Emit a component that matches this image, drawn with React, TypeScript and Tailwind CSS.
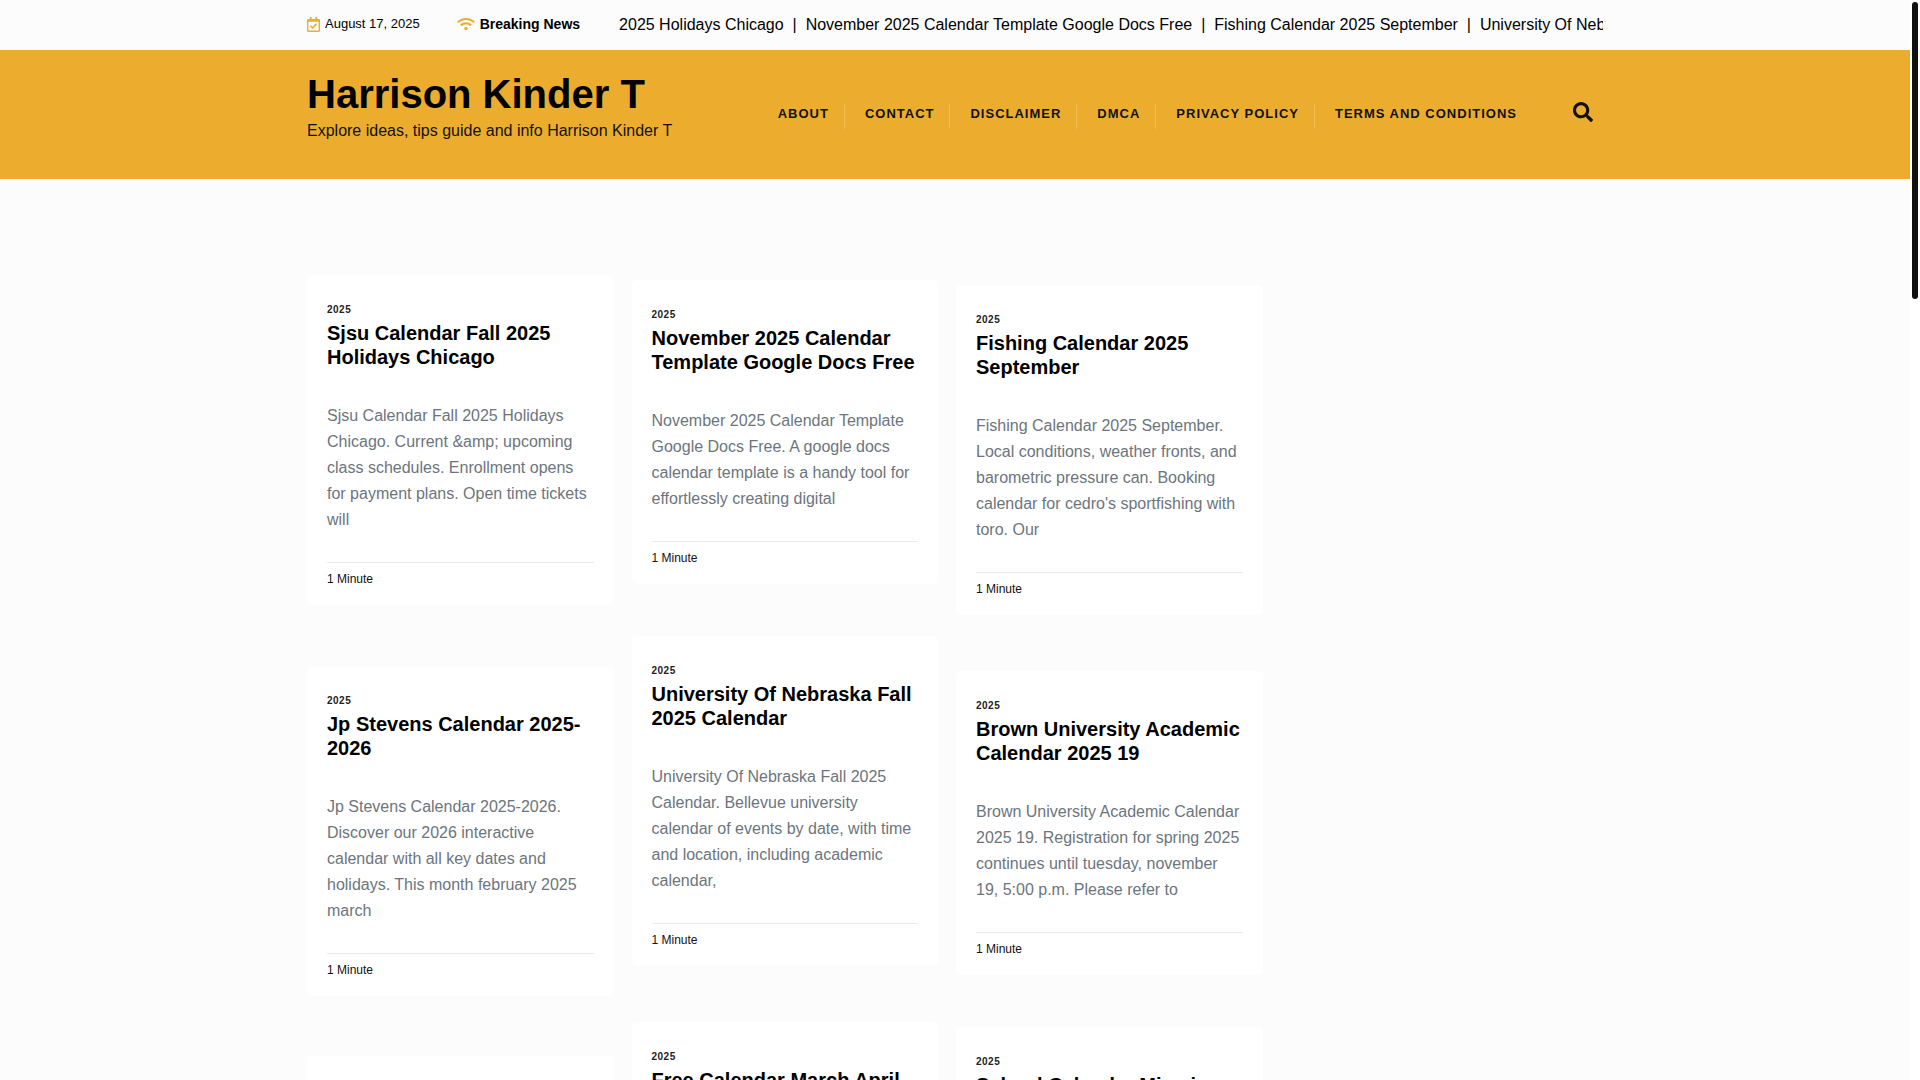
import React from "react";
import { FaRegCalendarCheck, FaSearch, FaWifi } from "react-icons/fa";

type Post = { title: string; excerpt?: string; spacing: string };

const ticker = [
  "2025 Holidays Chicago",
  "November 2025 Calendar Template Google Docs Free",
  "Fishing Calendar 2025 September",
  "University Of Nebraska Fall 2025 Calendar",
];

const menu = ["About", "Contact", "Disclaimer", "DMCA", "Privacy Policy", "Terms and Conditions"];

const columns: { offset: string; posts: Post[] }[] = [
  {
    offset: "pt-24",
    posts: [
      {
        title: "Sjsu Calendar Fall 2025 Holidays Chicago",
        excerpt:
          "Sjsu Calendar Fall 2025 Holidays Chicago. Current &amp; upcoming class schedules. Enrollment opens for payment plans. Open time tickets will",
        spacing: "mt-0",
      },
      {
        title: "Jp Stevens Calendar 2025-2026",
        excerpt:
          "Jp Stevens Calendar 2025-2026. Discover our 2026 interactive calendar with all key dates and holidays. This month february 2025 march",
        spacing: "mt-[61px]",
      },
      { title: "", spacing: "mt-[60px]" },
    ],
  },
  {
    offset: "pt-[101px]",
    posts: [
      {
        title: "November 2025 Calendar Template Google Docs Free",
        excerpt:
          "November 2025 Calendar Template Google Docs Free. A google docs calendar template is a handy tool for effortlessly creating digital",
        spacing: "mt-0",
      },
      {
        title: "University Of Nebraska Fall 2025 Calendar",
        excerpt:
          "University Of Nebraska Fall 2025 Calendar. Bellevue university calendar of events by date, with time and location, including academic calendar,",
        spacing: "mt-[52px]",
      },
      { title: "Free Calendar March April", spacing: "mt-[56px]" },
    ],
  },
  {
    offset: "pt-[106px]",
    posts: [
      {
        title: "Fishing Calendar 2025 September",
        excerpt:
          "Fishing Calendar 2025 September. Local conditions, weather fronts, and barometric pressure can. Booking calendar for cedro's sportfishing with toro. Our",
        spacing: "mt-0",
      },
      {
        title: "Brown University Academic Calendar 2025 19",
        excerpt:
          "Brown University Academic Calendar 2025 19. Registration for spring 2025 continues until tuesday, november 19, 5:00 p.m. Please refer to",
        spacing: "mt-[56px]",
      },
      { title: "School Calendar Miami", spacing: "mt-[52px]" },
    ],
  },
];

function TopBar() {
  return (
    <div className="mx-auto flex h-[50px] w-full max-w-[1320px] items-center px-3">
      <div className="flex shrink-0 items-center gap-[5px] pb-0.5 text-[13px] leading-5">
        <FaRegCalendarCheck className="h-[15px] w-[13px] text-[#ecad2e]" />
        <span>August 17, 2025</span>
      </div>
      <div className="ml-[37px] flex shrink-0 items-center gap-[5px] pb-0.5 text-[14px] leading-5 font-bold">
        <FaWifi className="h-[14px] w-[18px] text-[#ecad2e]" />
        <span>Breaking News</span>
      </div>
      <div className="ml-[39px] flex min-w-0 flex-1 overflow-hidden text-base whitespace-nowrap">
        {ticker.map((item, i) => (
          <React.Fragment key={item}>
            {i > 0 && <span className="w-[22px] shrink-0 text-center">|</span>}
            <a href="#" className="shrink-0">
              {item}
            </a>
          </React.Fragment>
        ))}
      </div>
    </div>
  );
}

function Header() {
  return (
    <header className="bg-[#ecad2e]">
      <div className="mx-auto flex w-full max-w-[1320px] items-start px-3 pt-5 pb-9">
        <div className="shrink-0">
          <h1 className="text-[40px] leading-12 font-bold text-black">
            <a href="#">Harrison Kinder T</a>
          </h1>
          <p className="mt-px text-base leading-6 text-[#111]">Explore ideas, tips guide and info Harrison Kinder T</p>
        </div>
        <nav className="mt-[34px] ml-auto flex">
          {menu.map((item, i) => (
            <a
              key={item}
              href="#"
              className={
                i < menu.length - 1
                  ? "mr-5 h-[25px] border-r border-[#f0bb55] pr-[15px] text-[13px] leading-5 font-bold tracking-[1px] text-[#111] uppercase"
                  : "h-[25px] text-[13px] leading-5 font-bold tracking-[1px] text-[#111] uppercase"
              }
            >
              {item}
            </a>
          ))}
        </nav>
        <button type="button" aria-label="Search" className="mt-8 mr-[10px] ml-14 text-[#111]">
          <FaSearch className="size-5" />
        </button>
      </div>
    </header>
  );
}

function PostCard({ post }: { post: Post }) {
  return (
    <article className={`rounded-[5px] bg-white px-5 pt-[27px] pb-[18px] ${post.spacing}`}>
      <a href="#" className="block text-[10px] leading-4 font-bold tracking-[0.5px] text-[#222]">
        2025
      </a>
      <h2 className="mt-[3px] min-h-12 text-xl leading-6 font-bold text-black">
        <a href="#">{post.title}</a>
      </h2>
      {post.excerpt && (
        <>
          <p className="mt-[34px] text-base leading-[26px] text-[#6c757d]">{post.excerpt}</p>
          <p className="mt-[29px] border-t border-[#ebebeb] pt-2 text-xs leading-4 text-[#111]">1 Minute</p>
        </>
      )}
    </article>
  );
}

export default function App() {
  return (
    <div className="flex h-screen overflow-hidden bg-white font-['Liberation_Sans',Arial,sans-serif] text-black">
      <div className="h-full min-w-0 flex-1 overflow-hidden bg-[#fcfcfc]">
        <TopBar />
        <Header />
        <main className="mx-auto w-full max-w-[1320px] px-3">
          <div className="-mr-0.5 grid grid-cols-4">
            {columns.map((column) => (
              <div key={column.offset} className={`pr-[18px] ${column.offset}`}>
                {column.posts.map((post) => (
                  <PostCard key={post.title} post={post} />
                ))}
              </div>
            ))}
          </div>
        </main>
      </div>
      <div className="w-[10px] shrink-0 px-0.5 pt-0.5">
        <div className="h-[27.5vh] w-1.5 rounded-full bg-[#111]" />
      </div>
    </div>
  );
}
